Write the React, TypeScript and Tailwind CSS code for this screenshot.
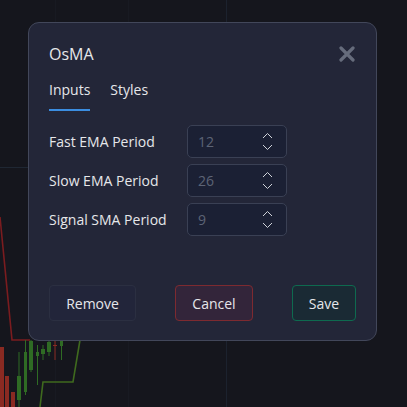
import React from "react";

const fields = [
  { label: "Fast EMA Period", value: "12" },
  { label: "Slow EMA Period", value: "26" },
  { label: "Signal SMA Period", value: "9" },
];

// candles peeking out under the dialog, bottom-left corner
const candles = [
  { x: 0, w: 4, top: 347, bottom: 407, wickTop: 347, wickBottom: 407, up: false },
  { x: 5, w: 4, top: 376, bottom: 407, wickTop: 376, wickBottom: 407, up: false },
  { x: 11, w: 4, top: 392, bottom: 407, wickTop: 392, wickBottom: 407, up: false },
  { x: 17, w: 4, top: 376, bottom: 400, wickTop: 352, wickBottom: 407, up: true },
  { x: 24, w: 3, top: 352, bottom: 392, wickTop: 340, wickBottom: 395, up: true },
  { x: 29, w: 4, top: 341, bottom: 370, wickTop: 340, wickBottom: 372, up: true },
  { x: 36, w: 3, top: 352, bottom: 356, wickTop: 345, wickBottom: 385, up: true },
  { x: 41, w: 4, top: 349, bottom: 354, wickTop: 345, wickBottom: 360, up: true },
  { x: 47, w: 4, top: 342, bottom: 352, wickTop: 340, wickBottom: 356, up: true },
  { x: 53, w: 4, top: 345, bottom: 346, wickTop: 340, wickBottom: 360, up: false },
  { x: 60, w: 3, top: 341, bottom: 346, wickTop: 340, wickBottom: 360, up: true },
];

function ChartBackdrop() {
  return (
    <svg className="absolute inset-0" width={407} height={407} viewBox="0 0 407 407">
      {/* grid */}
      <line x1={55.5} y1={0} x2={55.5} y2={407} stroke="#181a22" strokeWidth={1} />
      <line x1={128.5} y1={0} x2={128.5} y2={407} stroke="#181a22" strokeWidth={1} />
      <line x1={226.5} y1={0} x2={226.5} y2={407} stroke="#1c222e" strokeWidth={1} />
      <line x1={0} y1={167.5} x2={28} y2={167.5} stroke="#1f2733" strokeWidth={1} />
      {/* moving averages */}
      <polyline points="0,217 12,340 30,340" fill="none" stroke="#7a1c1f" strokeWidth={1.6} />
      <polyline points="40,407 43,382 73,382 80,340" fill="none" stroke="#3f6a1e" strokeWidth={1.6} />
      {candles.map((c, i) => {
        const color = c.up ? "#2f6b24" : "#8a2a22";
        return (
          <g key={i}>
            <line
              x1={c.x + c.w / 2}
              x2={c.x + c.w / 2}
              y1={c.wickTop}
              y2={c.wickBottom}
              stroke={color}
              strokeWidth={1}
            />
            <rect x={c.x} y={c.top} width={c.w} height={Math.max(1, c.bottom - c.top)} fill={color} />
          </g>
        );
      })}
    </svg>
  );
}

function Spinner() {
  return (
    <svg width={11} height={19} viewBox="0 0 11 19" fill="none" stroke="#cfd2d9" strokeWidth={1}>
      <polyline points="1,6 5.5,1.5 10,6" />
      <polyline points="1,13 5.5,17.5 10,13" />
    </svg>
  );
}

export default function App() {
  return (
    <div
      className="relative w-[407px] h-[407px] overflow-hidden bg-[#15161d]"
      style={{ fontFamily: '"Open Sans", "Noto Sans", sans-serif' }}
    >
      <ChartBackdrop />

      <div className="relative flex pl-[28px] pt-[22px]">
        <div className="flex h-[319px] w-[349px] flex-col rounded-[11px] border border-[#42475a] bg-[#232638] px-[20px] pt-[19px] pb-[19px]">
          {/* header */}
          <div className="flex h-[24px] items-center justify-between">
            <span className="text-[16px] leading-[24px] text-[#e6e7ea]">OsMA</span>
            <svg width={16} height={16} viewBox="0 0 16 16" className="mr-[1px]">
              <path d="M2 2 L14 14 M14 2 L2 14" stroke="#666c7c" strokeWidth={3.2} strokeLinecap="round" />
            </svg>
          </div>

          {/* tabs */}
          <div className="mt-[14px] flex gap-[20px] text-[14px] leading-[20px]">
            <span className="border-b-2 border-[#3b8de0] pb-[9px] text-[#e6e7ea]">Inputs</span>
            <span className="pb-[9px] text-[#e6e7ea]">Styles</span>
          </div>

          {/* inputs */}
          <div className="mt-[14px] flex flex-col gap-[6px]">
            {fields.map((f) => (
              <div key={f.label} className="flex items-center">
                <span className="w-[138px] text-[14px] text-[#e6e7ea]">{f.label}</span>
                <div className="flex h-[33px] w-[100px] items-center justify-between rounded-[5px] border border-[#3a4054] bg-[#1b2034] pl-[10px] pr-[13px]">
                  <span className="text-[14px] text-[#5d6476]">{f.value}</span>
                  <Spinner />
                </div>
              </div>
            ))}
          </div>

          {/* actions */}
          <div className="mt-auto flex items-center justify-between text-[14px] text-[#e6e7ea]">
            <button className="h-[36px] w-[87px] rounded-[4px] border border-[#2b2f41] bg-[#22253a]">
              Remove
            </button>
            <button className="h-[36px] w-[78px] rounded-[4px] border border-[#7d2a30] bg-[#33253a]">
              Cancel
            </button>
            <button className="h-[36px] w-[64px] rounded-[4px] border border-[#0e6a4f] bg-[#1a2a34]">
              Save
            </button>
          </div>
        </div>
      </div>
    </div>
  );
}
